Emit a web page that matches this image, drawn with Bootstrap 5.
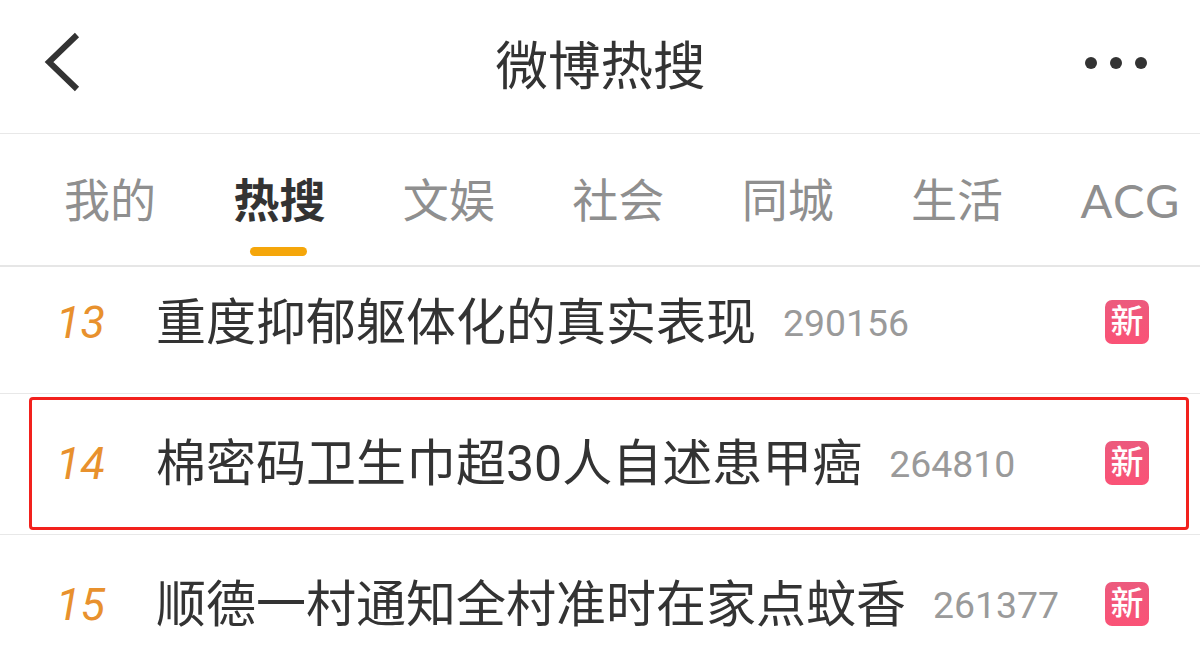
<!DOCTYPE html>
<html lang="zh">
<head>
<meta charset="UTF-8">
<title>微博热搜</title>
<link href="https://cdn.jsdelivr.net/npm/bootstrap@5.3.0/dist/css/bootstrap.min.css" rel="stylesheet">
<style>
html, body { height: 670px; overflow: hidden; }
body { background: #fff; font-family: Roboto, "Noto Sans CJK SC", sans-serif; color: #333; }
.top-bar { height: 134px; border-bottom: 1px solid #e8e8e8; padding: 0 52px 0 44px; }
.back-box { width: 73px; margin-bottom: 10px; }
.back-box svg { display: block; }
.more-icon { margin-bottom: 8px; }
.top-title { font-size: 52.5px; line-height: 1; color: #333; margin-top: 2px; }
.tab-bar { height: 133px; border-bottom: 2px solid #e6e6e6; padding: 2px 19px 0 64px; }
.tab-item { font-size: 46px; line-height: 1; color: #8f8f8f; position: relative; }
.tab-item.active-tab { color: #333; font-weight: 700; }
.tab-item.active-tab::after { content: ""; position: absolute; left: 17px; right: 18px; bottom: -32px; height: 9px; border-radius: 5px; background: #f5a60a; }
.tab-latin { font-family: Lato, sans-serif; font-size: 47px; letter-spacing: 1.5px; }
.hot-row { height: 141px; border-bottom: 1px solid #e8e8e8; padding-left: 56px; padding-right: 51px; }
.hot-row:last-child { border-bottom: 0; }
.hot-row.first-row { height: 127px; padding-bottom: 14px; }
.hot-rank { width: 100px; font-size: 45px; font-style: italic; color: #e8912d; flex-shrink: 0; }
.hot-text { font-size: 50px; line-height: 1; color: #333; white-space: nowrap; }
.hot-num { font-size: 37.4px; color: #9a9a9a; margin-left: 27px; }
.hot-tag { width: 44px; height: 44px; margin-bottom: 2px; border-radius: 7px; background: linear-gradient(#ec5a7d, #fa5276); color: #fff; font-size: 33px; font-weight: 500; line-height: 43px; text-align: center; flex-shrink: 0; }
.red-frame { position: absolute; left: 29px; top: 397px; width: 1160px; height: 133px; border: 3px solid #f2211d; border-radius: 4px; pointer-events: none; }
</style>
</head>
<body>
<div class="top-bar d-flex align-items-center justify-content-between">
    <div class="back-box">
        <svg width="36" height="62" viewBox="0 0 36 62"><path d="M33 4 5 31l28 27" fill="none" stroke="#333" stroke-width="6"/></svg>
    </div>
    <div class="top-title">微博热搜</div>
    <svg class="more-icon" width="64" height="14" viewBox="0 0 64 14"><circle cx="7" cy="7" r="6" fill="#333"/><circle cx="32" cy="7" r="6" fill="#333"/><circle cx="57" cy="7" r="6" fill="#333"/></svg>
</div>
<div class="tab-bar d-flex align-items-center justify-content-between">
    <span class="tab-item">我的</span>
    <span class="tab-item active-tab">热搜</span>
    <span class="tab-item">文娱</span>
    <span class="tab-item">社会</span>
    <span class="tab-item">同城</span>
    <span class="tab-item">生活</span>
    <span class="tab-item tab-latin">ACG</span>
</div>
<div class="hot-row first-row d-flex align-items-center">
    <span class="hot-rank">13</span>
    <span class="hot-text">重度抑郁躯体化的真实表现</span>
    <span class="hot-num">290156</span>
    <span class="hot-tag ms-auto">新</span>
</div>
<div class="hot-row d-flex align-items-center">
    <span class="hot-rank">14</span>
    <span class="hot-text">棉密码卫生巾超30人自述患甲癌</span>
    <span class="hot-num">264810</span>
    <span class="hot-tag ms-auto">新</span>
</div>
<div class="hot-row d-flex align-items-center">
    <span class="hot-rank">15</span>
    <span class="hot-text">顺德一村通知全村准时在家点蚊香</span>
    <span class="hot-num">261377</span>
    <span class="hot-tag ms-auto">新</span>
</div>
<div class="red-frame"></div>
<script src="https://cdn.jsdelivr.net/npm/bootstrap@5.3.0/dist/js/bootstrap.bundle.min.js"></script>
</body>
</html>
